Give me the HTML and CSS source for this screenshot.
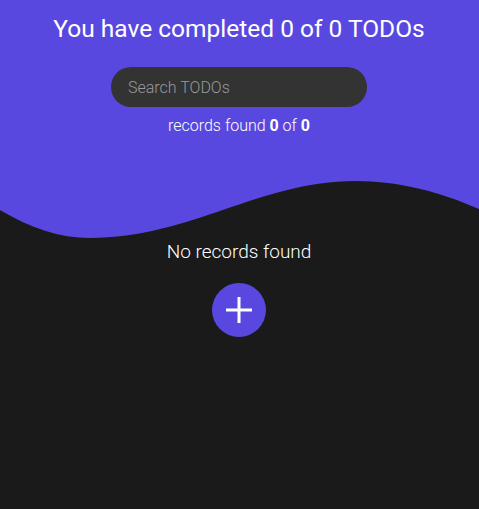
FILE: index.html
```html
<!DOCTYPE html>
<html>
<head>
<meta charset="utf-8">
<link rel="stylesheet" href="styles.css">
</head>
<body>
<header class="hero">
  <h1 class="title">You have completed 0 of 0 TODOs</h1>
  <input class="search" type="text" placeholder="Search TODOs">
  <p class="count">records found <b>0</b> of <b>0</b></p>
</header>
<svg class="wave" viewBox="0 0 479 60" preserveAspectRatio="none" width="479" height="60">
  <path d="M0,0 H479 V29 C440,12 400,1 355,1 C260,1 190,58 90,58 C60,58 30,48 0,30 Z" fill="#5948df"/>
</svg>
<main class="content">
  <p class="empty">No records found</p>
  <button class="add" aria-label="Add">
    <svg width="28" height="28" viewBox="0 0 28 28"><path d="M14 1V27M1 14H27" stroke="#fff" stroke-width="3"/></svg>
  </button>
</main>
</body>
</html>
```
FILE: styles.css
```css
html, body {
  margin: 0;
  padding: 0;
  background: #1a1a1a;
  font-family: Roboto, "Noto Sans", sans-serif;
  color: #fff;
}
.hero {
  background: #5948df;
  height: 180px;
  display: flex;
  flex-direction: column;
  align-items: center;
  box-sizing: border-box;
  padding-top: 14px;
  padding-right: 1px;
}
.title {
  margin: 0;
  font-size: 24.5px;
  font-weight: 400;
  line-height: 30px;
}
.search {
  margin-top: 23px;
  width: 256px;
  height: 40px;
  box-sizing: border-box;
  border: none;
  border-radius: 20px;
  background: #333;
  color: #fff;
  padding: 0 17px;
  font-family: inherit;
  font-size: 16px;
  font-weight: 300;
  outline: none;
}
.search::placeholder {
  color: #9a9a9a;
}
.count {
  margin: 9px 0 0;
  font-size: 16px;
  font-weight: 300;
  line-height: 20px;
}
.count b {
  font-weight: 700;
}
.wave {
  display: block;
}
.content {
  display: flex;
  flex-direction: column;
  align-items: center;
  padding-right: 1px;
}
.empty {
  margin: 1px 0 0;
  font-size: 19px;
  font-weight: 300;
  line-height: 22px;
}
.add {
  margin-top: 20px;
  width: 54px;
  height: 54px;
  border-radius: 50%;
  border: none;
  background: #5948df;
  display: flex;
  align-items: center;
  justify-content: center;
  padding: 0;
}
.add svg {
  display: block;
}
```
